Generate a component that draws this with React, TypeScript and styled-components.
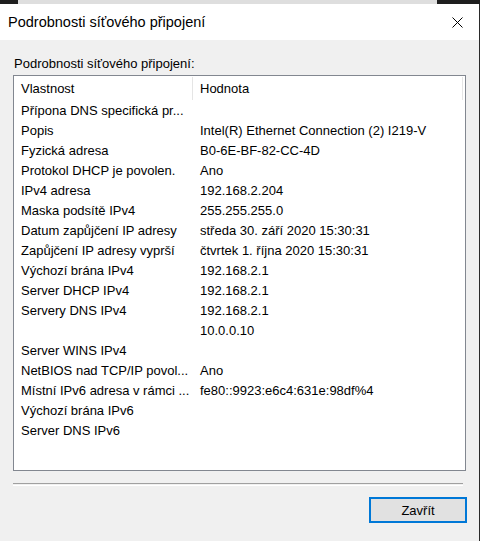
import React from "react";
import styled, { createGlobalStyle } from "styled-components";

const Global = createGlobalStyle`
  html, body { margin: 0; padding: 0; background: #f0f0f0; }
  body { font-family: "Liberation Sans", Arial, sans-serif; color: #000; }
`;

const Screen = styled.div`
  width: 480px;
  height: 541px;
  display: flex;
  flex-direction: column;
  overflow: hidden;
`;

const BackStrip = styled.div`
  height: 4px;
  display: grid;
  grid-template-columns: 18px 419px 1fr;
  background: #1e1e1e;
`;

const BackWindow = styled.div`
  grid-column: 2;
  background: #dedede;
`;

const Frame = styled.div`
  flex: 1;
  display: flex;
  flex-direction: column;
  border-right: 1px solid #2a2a2a;
  background: #f0f0f0;
`;

const TitleBar = styled.div`
  height: 36px;
  background: #fff;
  display: flex;
  align-items: center;
  justify-content: space-between;
  padding-left: 8px;
`;

const Title = styled.div`
  font-size: 14.5px;
  color: #000;
  padding-bottom: 1px;
`;

const CloseButton = styled.div`
  width: 44px;
  height: 36px;
  display: flex;
  align-items: center;
  justify-content: center;
`;

const Body = styled.div`
  flex: 1;
  display: flex;
  flex-direction: column;
  padding: 14px 13px 0 13px;
  font-size: 13px;
`;

const Label = styled.div`
  height: 21px;
  line-height: 19px;
  padding-left: 1px;
`;

const ListBox = styled.div`
  height: 396px;
  box-sizing: border-box;
  border: 1px solid #828790;
  background: #fff;
  display: flex;
  flex-direction: column;
`;

const HeaderRow = styled.div`
  height: 25px;
  display: grid;
  grid-template-columns: 179px 1fr;
  align-items: stretch;
`;

const HeaderCell = styled.div<{ $last?: boolean }>`
  display: flex;
  align-items: center;
  padding-left: 7px;
  margin-top: 1px;
  margin-bottom: 1px;
  border-right: 1px solid #e5e5e5;
  margin-right: ${(p) => (p.$last ? "2px" : "0")};
  padding-bottom: 1px;
`;

const Row = styled.div`
  height: 20px;
  display: grid;
  grid-template-columns: 179px 1fr;
  align-items: center;
  line-height: 20px;
`;

const Cell = styled.div`
  padding-left: 7px;
  white-space: nowrap;
  overflow: hidden;
`;

const Separator = styled.div`
  margin-top: 12px;
  width: 450px;
  height: 1px;
  border-top: 1px solid #a0a0a0;
  border-bottom: 1px solid #fff;
`;

const ButtonBar = styled.div`
  display: flex;
  justify-content: flex-end;
  padding-top: 11px;
`;

const Button = styled.button`
  width: 98px;
  height: 26px;
  box-sizing: border-box;
  border: 2px solid #0078d7;
  background: #e1e1e1;
  font-family: "Liberation Sans", Arial, sans-serif;
  font-size: 13px;
  color: #000;
  padding: 0;
  margin-right: -1px;
`;

const rows: [string, string][] = [
  ["Přípona DNS specifická pr...", ""],
  ["Popis", "Intel(R) Ethernet Connection (2) I219-V"],
  ["Fyzická adresa", "B0-6E-BF-82-CC-4D"],
  ["Protokol DHCP je povolen.", "Ano"],
  ["IPv4 adresa", "192.168.2.204"],
  ["Maska podsítě IPv4", "255.255.255.0"],
  ["Datum zapůjčení IP adresy", "středa 30. září 2020 15:30:31"],
  ["Zapůjčení IP adresy vyprší", "čtvrtek 1. října 2020 15:30:31"],
  ["Výchozí brána IPv4", "192.168.2.1"],
  ["Server DHCP IPv4", "192.168.2.1"],
  ["Servery DNS IPv4", "192.168.2.1"],
  ["", "10.0.0.10"],
  ["Server WINS IPv4", ""],
  ["NetBIOS nad TCP/IP povol...", "Ano"],
  ["Místní IPv6 adresa v rámci ...", "fe80::9923:e6c4:631e:98df%4"],
  ["Výchozí brána IPv6", ""],
  ["Server DNS IPv6", ""],
];

export default function App() {
  return (
    <Screen>
      <Global />
      <BackStrip>
        <BackWindow />
      </BackStrip>
      <Frame>
        <TitleBar>
          <Title>Podrobnosti síťového připojení</Title>
          <CloseButton>
            <svg width="11" height="11" viewBox="0 0 11 11">
              <path d="M0.5 0.5 L10.5 10.5 M10.5 0.5 L0.5 10.5" stroke="#000" strokeWidth="1" fill="none" />
            </svg>
          </CloseButton>
        </TitleBar>
        <Body>
          <Label>Podrobnosti síťového připojení:</Label>
          <ListBox>
            <HeaderRow>
              <HeaderCell>Vlastnost</HeaderCell>
              <HeaderCell $last>Hodnota</HeaderCell>
            </HeaderRow>
            {rows.map(([k, v], i) => (
              <Row key={i}>
                <Cell>{k}</Cell>
                <Cell>{v}</Cell>
              </Row>
            ))}
          </ListBox>
          <Separator />
          <ButtonBar>
            <Button>Zavřít</Button>
          </ButtonBar>
        </Body>
      </Frame>
    </Screen>
  );
}
